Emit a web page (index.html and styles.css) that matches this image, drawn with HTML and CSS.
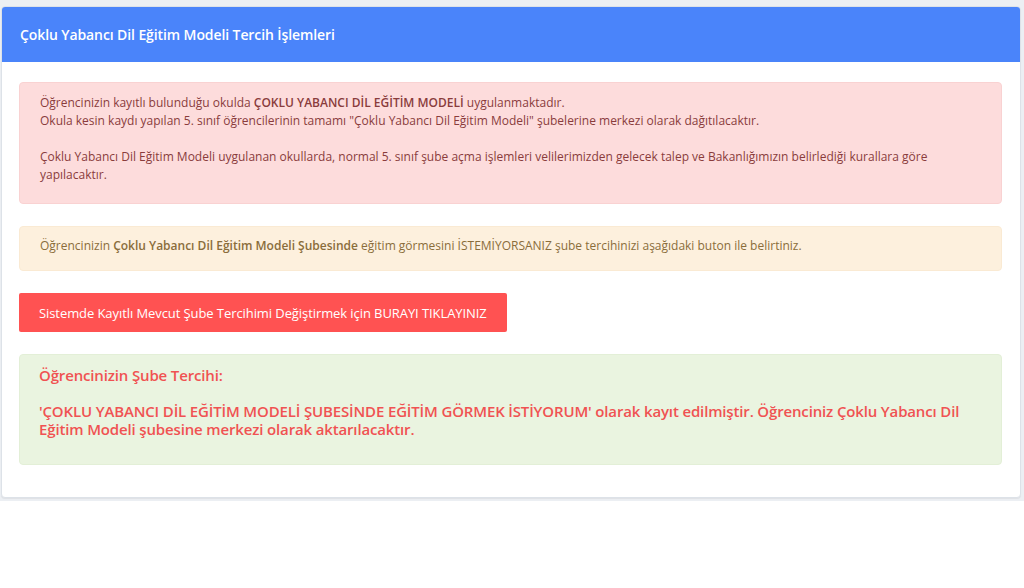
FILE: index.html
```html
<!DOCTYPE html>
<html lang="tr">
<head>
    <meta charset="UTF-8">
    <title>Çoklu Yabancı Dil Eğitim Modeli Tercih İşlemleri</title>
    <link rel="stylesheet" href="styles.css">
</head>
<body>
    <div class="page">
        <div class="card">
            <div class="card-header">Çoklu Yabancı Dil Eğitim Modeli Tercih İşlemleri</div>
            <div class="card-body">
                <div class="alert alert-danger">
                    Öğrencinizin kayıtlı bulunduğu okulda <b>ÇOKLU YABANCI DİL EĞİTİM MODELİ</b> uygulanmaktadır.<br>
                    Okula kesin kaydı yapılan 5. sınıf öğrencilerinin tamamı "Çoklu Yabancı Dil Eğitim Modeli" şubelerine merkezi olarak dağıtılacaktır.<br>
                    <br>
                    Çoklu Yabancı Dil Eğitim Modeli uygulanan okullarda, normal 5. sınıf şube açma işlemleri velilerimizden gelecek talep ve Bakanlığımızın belirlediği kurallara göre yapılacaktır.
                </div>

                <div class="alert alert-warning">
                    Öğrencinizin <b>Çoklu Yabancı Dil Eğitim Modeli Şubesinde</b> eğitim görmesini İSTEMİYORSANIZ şube tercihinizi aşağıdaki buton ile belirtiniz.
                </div>

                <button class="btn-change" onclick="return false">Sistemde Kayıtlı Mevcut Şube Tercihimi Değiştirmek için BURAYI TIKLAYINIZ</button>

                <div class="alert alert-success">
                    Öğrencinizin Şube Tercihi:<br>
                    <br>
                    'ÇOKLU YABANCI DİL EĞİTİM MODELİ ŞUBESİNDE EĞİTİM GÖRMEK İSTİYORUM' olarak kayıt edilmiştir. Öğrenciniz Çoklu Yabancı Dil Eğitim Modeli şubesine merkezi olarak aktarılacaktır.
                </div>
            </div>
        </div>
    </div>
</body>
</html>
```

FILE: styles.css
```css
body {
    font-family: 'Open Sans', 'Noto Sans', sans-serif;
    margin: 0;
    padding: 0;
    background-color: white;
}
.page {
    background-color: #eceff3;
    padding: 6px 3px 3px 1px;
}
.card {
    background-color: white;
    border: 1px solid #dde2e8;
    border-radius: 4px;
    overflow: hidden;
    box-shadow: 0 1px 1px rgba(0, 0, 0, 0.06);
}
.card-header {
    background-color: #4a84fa;
    color: white;
    height: 55px;
    line-height: 55px;
    padding: 0 18px;
    font-size: 14px;
    font-weight: 600;
    letter-spacing: -0.1px;
}
.card-body {
    padding: 20px 18px 32px 17px;
}
.alert {
    border-radius: 4px;
    font-size: 12px;
    line-height: 18px;
    padding: 11px 20px 19px;
    margin-bottom: 22px;
}
.alert b {
    font-weight: 600;
}
.alert-danger {
    background-color: #fddcdc;
    border: 1px solid #f9d2d2;
    color: #8a3c3c;
}
.alert-warning {
    background-color: #fdf0dd;
    border: 1px solid #faead3;
    color: #8a6d3b;
    padding: 10px 20px 15px;
}
.btn-change {
    display: block;
    font-family: inherit;
    font-size: 13px;
    letter-spacing: -0.08px;
    height: 39px;
    padding: 0 20px;
    background-color: #ff5252;
    color: white;
    border: none;
    border-radius: 2px;
    cursor: pointer;
    margin-bottom: 22px;
}
.btn-change:hover {
    background-color: #f03e3e;
}
.alert-success {
    background-color: #eaf4e0;
    border: 1px solid #e3efd7;
    color: #f05252;
    font-size: 15px;
    font-weight: 600;
    letter-spacing: -0.15px;
    padding: 11px 19px 26px;
    margin-bottom: 0;
}
```
